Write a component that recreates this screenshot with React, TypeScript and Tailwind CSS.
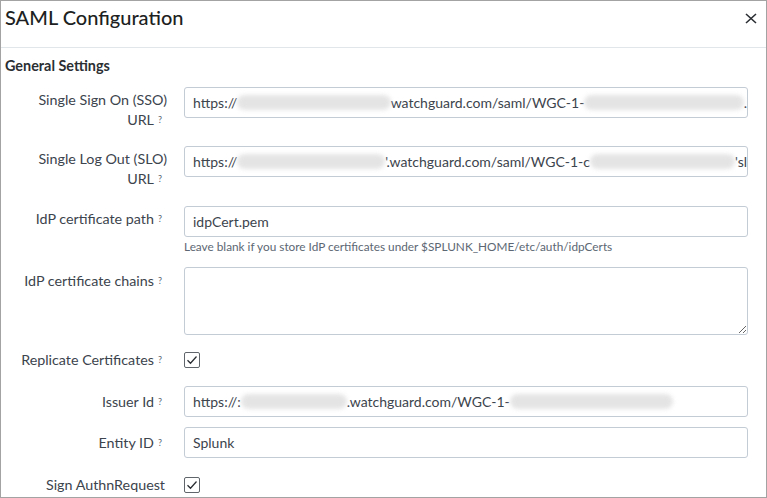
import React from "react";

const Q = () => (
  <sup className="text-[9px] text-[#5c6773] ml-[4px] mr-[5px] relative top-[-2px]">?</sup>
);

const Blur = ({ w }: { w: number }) => (
  <span
    className="inline-block h-[15px] bg-[#dedede] rounded-full blur-[2px] align-middle opacity-80"
    style={{ width: w }}
  />
);

const Check = () => (
  <div className="w-[16px] h-[16px] border border-[#5f656b] rounded-[2px] flex items-center justify-center bg-white">
    <svg width="12" height="10" viewBox="0 0 12 10">
      <path d="M1.5 5.2 L4.5 8.2 L10.5 1.5" fill="none" stroke="#2b2f33" strokeWidth="1.3" />
    </svg>
  </div>
);

const Label = ({ children, className = "" }: { children: React.ReactNode; className?: string }) => (
  <div className={`w-[166px] shrink-0 text-right text-[14.3px] leading-[20px] text-[#3c444d] ${className}`}>
    {children}
  </div>
);

const Input = ({ children }: { children: React.ReactNode }) => (
  <div className="ml-[17px] w-[564px] h-[31px] border border-[#c3cbd4] rounded-[3px] pl-[8px] flex items-center text-[14px] text-[#3c444d] whitespace-nowrap overflow-hidden">
    {children}
  </div>
);

export default function App() {
  return (
    <div className="w-[767px] h-[498px] border border-[#a3a3a3] bg-white overflow-hidden font-['Lato',sans-serif] text-[#3c444d]">
      <div className="h-[47px] border-b border-[#e1e6eb] flex items-center justify-between pl-[4px] pr-[9px]">
        <div className="text-[20px] font-medium text-[#1d1f22] leading-[24px] -mt-[15px]">SAML Configuration</div>
        <svg width="12" height="11" viewBox="0 0 12 11" className="-mt-[12px]">
          <path d="M1 1 L11 10 M11 1 L1 10" stroke="#2b2f33" strokeWidth="1.6" />
        </svg>
      </div>
      <div className="pt-[9px] flex flex-col">
        <div className="pl-[4px] h-[17px] leading-[17px] text-[14.4px] font-bold text-[#2b2f33]">General Settings</div>

        <div className="flex mt-[13px]">
          <Label className="pt-[3px]">
            Single Sign On (SSO)
            <br />
            URL<Q />
          </Label>
          <Input>
            https://<Blur w={156} />watchguard.com/saml/WGC-1-<Blur w={162} />.
          </Input>
        </div>

        <div className="flex mt-[16px]">
          <Label className="pt-[3px]">
            Single Log Out (SLO)
            <br />
            URL<Q />
          </Label>
          <Input>
            https://<Blur w={148} />'.watchguard.com/saml/WGC-1-c<Blur w={145} />'sl
          </Input>
        </div>

        <div className="flex mt-[17px]">
          <Label className="pt-[3px]">
            IdP certificate path<Q />
          </Label>
          <div className="flex flex-col">
            <Input>idpCert.pem</Input>
            <div className="ml-[17px] mt-[3px] text-[11.8px] leading-[14px] text-[#5c6773]">
              Leave blank if you store IdP certificates under $SPLUNK_HOME/etc/auth/idpCerts
            </div>
          </div>
        </div>

        <div className="flex mt-[13px]">
          <Label className="pt-[4px]">
            IdP certificate chains<Q />
          </Label>
          <textarea
            readOnly
            className="ml-[17px] w-[564px] h-[68px] border border-[#c3cbd4] rounded-[3px] outline-none"
          />
        </div>

        <div className="flex mt-[17px] items-center h-[16px]">
          <Label>
            Replicate Certificates<Q />
          </Label>
          <div className="ml-[17px]">
            <Check />
          </div>
        </div>

        <div className="flex mt-[18px] items-center">
          <Label>
            Issuer Id<Q />
          </Label>
          <Input>
            https://:<Blur w={106} />.watchguard.com/WGC-1-<Blur w={163} />
          </Input>
        </div>

        <div className="flex mt-[10px] items-center">
          <Label>
            Entity ID<Q />
          </Label>
          <Input>Splunk</Input>
        </div>

        <div className="flex mt-[19px] items-center h-[16px]">
          <Label className="pr-[2px]">Sign AuthnRequest</Label>
          <div className="ml-[17px]">
            <Check />
          </div>
        </div>
      </div>
    </div>
  );
}
